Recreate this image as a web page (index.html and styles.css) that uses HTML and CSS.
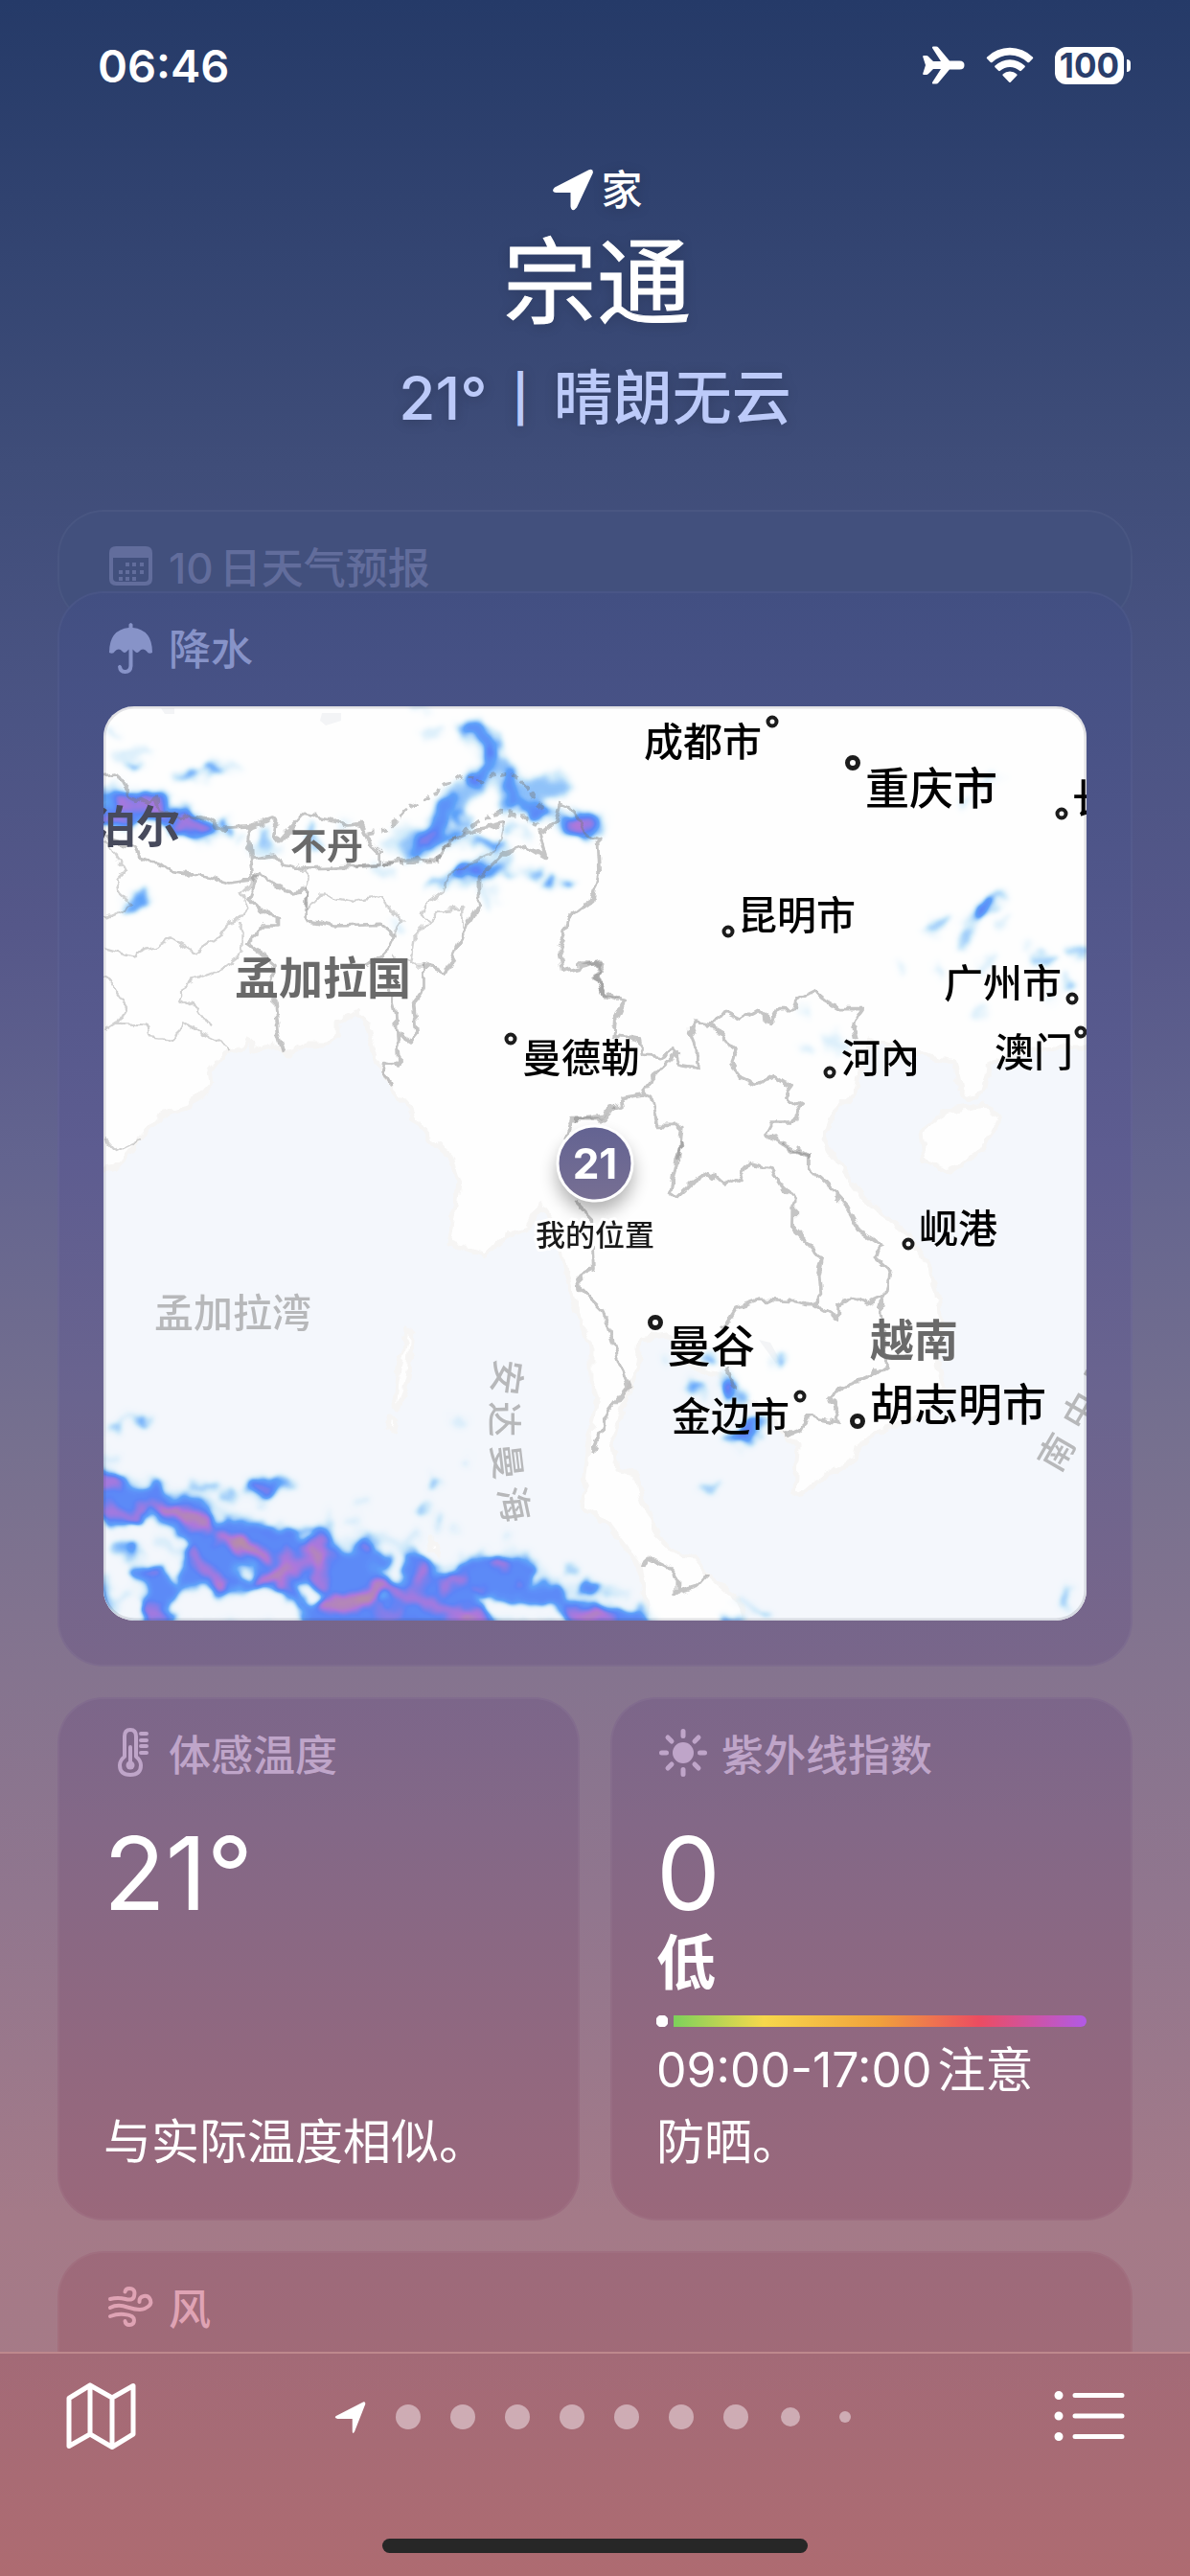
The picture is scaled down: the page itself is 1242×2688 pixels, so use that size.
FILE: index.html
```html
<!DOCTYPE html>
<html lang="zh-CN">
<head>
<meta charset="utf-8">
<meta name="viewport" content="width=device-width, initial-scale=1">
<title>天气</title>
<link rel="stylesheet" href="styles.css">
</head>
<body>
<div class="status">
  <span class="clock">06:46</span>
  <span class="status-icons">
    <svg class="plane" viewBox="0 0 44 40" aria-label="飞行模式"><path d="M1 10h3q1 0 2 1l5 5h8L10 2q-.6-1.600 1-1.600h3q1.500 0 2.500 1.300L28 15.500h10.500q5 0 5 4.500t-5 4.500H28L16.500 38.300q-1 1.300-2.500 1.300h-3q-1.600 0-1-1.600l9-14h-8l-5 5q-1 1-2 1H1q-1 0-.8-1.200L3 20 .2 11.200Q0 10 1 10z"/></svg>
    <svg class="wifi" viewBox="0 0 50 38" aria-label="无线网络"><g><path d="M1.200 10.500a34 34 0 0 1 47.600 0q.9.9 0 1.800l-3.600 3.600q-.9.900-1.800 0a26.500 26.500 0 0 0-36.800 0q-.9.900-1.800 0l-3.600-3.600q-.9-.900 0-1.800z"/><path d="M9.500 19.500a22.500 22.500 0 0 1 31 0q.9.9 0 1.800l-3.600 3.500q-.9.900-1.800 0a15 15 0 0 0-20.200 0q-.9.900-1.800 0l-3.600-3.500q-.9-.900 0-1.800z"/><path d="M17.800 28.200a11 11 0 0 1 14.400 0q1 .9 0 1.900l-6.200 6.300q-1 1-2 0l-6.200-6.300q-1-1 0-1.900z"/></g></svg>
    <span class="battery">100</span>
  </span>
</div>

<header class="place">
  <p class="tag">
    <svg class="loc" viewBox="0 0 44 44" aria-hidden="true"><path d="M3 19.500 38.500 1.200Q43.500-.5 42.800 4.500L26 40.500q-5 6-6.500-1V25H4.500Q-1.500 24 3 19.500z"/></svg>
    <span>家</span>
  </p>
  <h1>宗通</h1>
  <p class="cond"><span>21°</span><span class="bar">|</span><span>晴朗无云</span></p>
</header>

<main class="cards">
  <section class="card forecast">
    <h2><svg class="icon" viewBox="0 0 56 56" aria-hidden="true"><path fill-rule="evenodd" d="M13 8h31q7 0 7 7v27q0 7-7 7H13q-7 0-7-7V15q0-7 7-7zM10 20v21q0 4 4 4h29q4 0 4-4V20z"/><path d="M23 25h4v4h-4zm7 0h4v4h-4zm8 0h4v4h-4zm-22 8h4v4h-4zm7 0h4v4h-4zm7 0h4v4h-4zm8 0h4v4h-4zm-22 7h4v4h-4zm7 0h4v4h-4zm7 0h4v4h-4z"/></svg><span><span class="count">10</span>日天气预报</span></h2>
  </section>

  <section class="card rain">
    <h2><svg class="icon" viewBox="0 0 56 56" aria-hidden="true"><path d="M6 34Q6 10 26.500 8V4.500q2-3 4 0V8Q51 10 51 34q-4 2-6-1.500-4-4-8 .5-2 2-4 0l-2.500-2.500V48q-.5 8-8 8-7 0-7.500-7.500 2-3.500 4 0Q19.500 52 22.500 52q3.500 0 4-4V30.500L24 33q-2 2-4 0-4-4.500-8-.5Q10 36 6 34z"/></svg><span>降水</span></h2>
    <svg class="map" viewBox="0 0 1026 954" role="img" aria-label="降水地图">
      <defs>
        <filter id="rough" x="-5%" y="-5%" width="110%" height="110%" color-interpolation-filters="sRGB">
          <feTurbulence type="fractalNoise" baseFrequency="0.08" numOctaves="2" seed="4"/>
          <feDisplacementMap in="SourceGraphic" scale="11" xChannelSelector="R" yChannelSelector="G"/>
        </filter>
        <filter id="radar" filterUnits="userSpaceOnUse" x="-40" y="-40" width="1106" height="1034" color-interpolation-filters="sRGB">
          <feGaussianBlur in="SourceGraphic" stdDeviation="3" result="soft"/>
          <feTurbulence type="fractalNoise" baseFrequency="0.05" numOctaves="2" seed="9"/>
          <feDisplacementMap in="soft" scale="20" xChannelSelector="R" yChannelSelector="G"/>
          <feGaussianBlur stdDeviation="2"/>
          <feColorMatrix values="0 0 0 1 0  0 0 0 1 0  0 0 0 1 0  0 0 0 1 0"/>
          <feComponentTransfer>
            <feFuncR type="table" tableValues=".92 .68 .34 .36 .68 .74"/>
            <feFuncG type="table" tableValues=".97 .86 .62 .52 .47 .60"/>
            <feFuncB type="table" tableValues="1 .97 .98 .97 .86 .55"/>
            <feFuncA type="table" tableValues="0 .6 .95 1 1 1"/>
          </feComponentTransfer>
        </filter>
        <filter id="drop" x="-40%" y="-40%" width="180%" height="180%"><feGaussianBlur stdDeviation="9"/></filter>
        <linearGradient id="pin" x1="0" y1="0" x2="0" y2="1"><stop stop-color="#636392"/><stop offset="1" stop-color="#776f93"/></linearGradient>
      </defs>

      <rect width="1026" height="954" fill="#fefefe"/>
      <!-- seas and islands -->
      <g class="sea" filter="url(#rough)">
        <path d="M-20 488 13 481 37 452 61 426 92 416 113 393 111 380 126 363 147 355 152 346 157 360 178 353 192 363 212 353 233 353 245 343 245 330 264 320 274 330 281 360 297 393 319 420 336 446 362 470 371 496 364 540 360 560 398 573 419 553 443 545 457 520 474 543 481 580 491 626 509 670 509 706 515 720 507 766 502 813 500 836 527 853 560 896 565 933 576 980H-20z"/>
        <path d="M1050 356 992 356 956 360 925 372 919 403 903 410 894 400 888 370 863 365 842 360 813 352 799 346 788 386 785 403 763 423 753 450 760 466 779 493 796 516 835 546 863 586 872 620 874 653 872 693 878 710 860 736 803 760 788 773 785 786 749 806 728 823 721 820 724 773 710 760 692 736 663 720 653 700 635 696 610 686 588 656 560 660 558 686 546 720 531 763 535 796 555 800 562 826 578 866 592 880 613 886 635 910 663 933 678 980H1050z"/>
        <path class="land" d="M853 443 878 423 921 416 935 430 919 460 917 463 885 485 856 476zM317 650l6 3-5 50-11 32-3-4 5-40zM299 742l6 4-2 10-6-4zM340 868l8 6 2 12-8-6z"/>
      </g>
      <g fill="#f3f4f6"><path d="M684 661l12 3 10 18-4 4zM60 2l14 0 0 6-10 0zM228 7l20 0 0 8-16 5-6-5z"/></g>

      <!-- precipitation intensity -->
      <g filter="url(#radar)">
        <g transform="translate(-7 -6) scale(.34438 .33333)">
          <g class="r1">
            <path class="s90" d="M1130 90 1190 140 1200 200 1130 270 1070 330 1040 400 950 470M1230 220 1260 320M1330 280 1400 260M1430 380 1490 400M1040 440 1100 410M1130 540 1220 500"/>
            <path class="s60" d="M1130 80 1200 130 1210 200 1130 270 1060 340 1020 430 950 480M1230 200 1260 280 1250 330M1320 270 1400 270M1260 230 1340 350M900 440 960 410M1400 380 1520 380"/>
            <path class="s30" d="M50 90 60 110M60 180 160 150M90 205 130 205M250 240 330 235M340 215 420 205M440 430 430 440M480 470 550 470M840 520 890 540M900 700 920 710M1160 440 1250 450M1160 510 1180 640M1290 540 1340 540M1210 600 1210 605M1290 400 1310 430M990 110 1040 90M80 650 160 610M60 260 60 330M750 380 760 385M960 20 990 20"/>
            <path class="s90" d="M0 330 180 340 330 400"/>
            <path class="s60" d="M0 330 180 340 330 410M0 370 100 370"/>
          </g>
          <g class="r2">
            <path class="s30" d="M1120 90 1150 90 1190 130 1200 180M1180 210 1140 250M1250 230 1260 330M1060 310 1040 390 1000 430 970 480M1100 350 1110 380M1060 430 1100 420M1290 330 1370 350M1430 370 1500 380 1480 420M1010 575 1070 560 1090 530M1150 550 1220 510M1150 440 1220 445M1380 570 1381 571M1430 570 1432 571M1250 545 1252 547M1338 540 1340 542M1250 400 1252 402"/>
            <path class="s60" d="M1000 435 1020 430M1450 390 1480 400M20 370 190 330 240 380 330 405M80 310 200 310"/>
            <path class="s30" d="M0 290 40 300M390 380 392 410M510 400 510 440M80 645 150 610M340 215 370 216M650 390 655 440M110 205 120 205M270 238 290 238M1195 165 1200 180M1140 245 1150 255M1090 530 1150 535M1320 350 1350 355M390 385 392 405M1380 570 1382 571M1430 570 1432 571"/>
          </g>
          <g class="r3">
            <path class="s40" d="M70 320 100 310M130 310 200 330 180 370M260 385 320 405M0 380 90 375M1460 385 1465 400"/>
            <path class="s20" d="M1090 530 1110 530M1140 535 1145 540M395 400 396 402M660 465 662 466"/>
          </g>
        </g>
        <g transform="translate(493 -6) scale(.35714 .33333)">
          <g class="r1"><path class="s30" d="M1180 270 1230 240M1130 330 1140 310M1030 720 1090 690M1130 770 1150 710M1150 690 1250 600M1240 700 1255 690M1180 850 1215 800M1060 830 1062 860M1350 810 1390 812M1450 780 1495 790M1430 880 1445 870M1170 985 1190 965M1390 940 1400 920M670 1090 690 1100M740 1070 760 1050M760 1090 790 1080M950 840 952 835M1320 770 1321 771M670 970 671 975"/><path class="s40" d="M1170 670 1240 610M1040 705 1080 690M1130 750 1145 725M1355 812 1385 812M1460 786 1488 788M1430 878 1442 872"/></g>
          <g class="r2"><path class="s30" d="M1175 660 1205 635"/></g>
          <g class="r2"><path class="s20" d="M1170 665 1200 635"/></g>
        </g>
        <g transform="translate(-7 454) scale(.34438 .33333)">
          <path class="r1 wide" d="M0 1010 60 1060 180 1080 330 1130 400 1170 560 1225 700 1200 730 1290 800 1230 930 1260 1000 1350 1170 1300 1290 1290 1330 1340 1420 1400 1560 1470V1520H-40V1010z"/>
          <path class="r2" fill-rule="evenodd" d="M-20 1000 60 1060 120 1090 180 1070 230 1110 330 1130 355 1190 400 1170 440 1200 500 1195 560 1225 640 1210 700 1215 730 1290 770 1300 780 1260 810 1230 850 1260 830 1330 880 1360 920 1380 930 1270 970 1300 1010 1350 1080 1370 1100 1310 1170 1300 1290 1300 1335 1340 1310 1390 1400 1380 1420 1440 1560 1470 1640 1450 1700 1490V1530H1500L1400 1460 1260 1440 1150 1420 1220 1530H650L580 1400 480 1410 420 1400 360 1440 320 1390 240 1420 200 1450 250 1480 200 1530H130L150 1400 100 1340 200 1320 240 1400 270 1290 250 1240 160 1170 100 1200-20 1180zM420 1335 480 1330 470 1360 430 1360zM620 1220 655 1220 650 1245 625 1245zM840 1290 900 1290 890 1340 830 1340zM590 1400 650 1390 690 1440 650 1450zM860 1430 900 1430 890 1455 860 1450z"/>
          <g class="r2">
            <path class="s60" d="M80 1270 110 1290M470 1080 540 1080M-10 1380 30 1440M870 1470 900 1470"/>
            <path class="s30" d="M290 1080 360 1080M390 1108 415 1108M575 1080 585 1080M40 900 70 900M140 873 160 873M1020 1055 1035 1055M980 1160 1000 1145M1430 1345 1450 1345M1470 1395 1510 1395M1020 1080 1022 1082M1030 1190 1032 1190M480 1080 535 1080M300 1080 350 1080"/>
          </g>
          <g class="r3">
            <path class="s40" d="M30 1150 90 1185 140 1155M180 1140 260 1170 330 1210M200 1160 320 1180M380 1240 440 1270 520 1300M280 1290 330 1340 380 1395M500 1380 580 1340 650 1300 700 1260M640 1270 680 1330 670 1390M690 1450 790 1450 870 1390 980 1430 1100 1490 1180 1490M0 1060 60 1075M150 1475 190 1475M1210 1310 1230 1325M580 1300 590 1340M1450 1500 1550 1490M1050 1390 1110 1370M980 1380 1010 1330M560 1390 590 1420"/>
            <path class="s20" d="M100 1270 110 1280M150 1350 180 1345M480 1080 520 1080M-5 1410 15 1415M1425 1465 1440 1465M1150 1405 1170 1405M810 1265 830 1270M1270 1395 1280 1395"/>
          </g>
          <g class="r3"><path class="s40" d="M210 1150 320 1190M400 1250 510 1295M650 1280 690 1310M700 1455 800 1445 860 1395M520 1380 580 1345"/></g>
          <g class="r3"><path class="s40" d="M425 1265 455 1270M795 1430 805 1425M1110 1490 1130 1485M378 1395 390 1395"/></g>
          <g class="r1"><path class="s30" d="M0 990 60 990M80 870 150 870M1080 873 1105 873M1110 1003 1130 1003M1250 1230 1250 1240M700 1170 705 1190M770 1185 780 1190M180 1240 240 1290M70 1440 110 1410M950 1240 980 1240M1080 1215 1082 1216M790 1135 815 1135M480 1135 500 1135M1500 1400 1560 1400"/></g>
        </g>
        <g transform="translate(493 454) scale(.35714 .33333)">
          <g class="r1"><path class="s30" d="M260 685 270 685M370 690 400 680M330 770 370 770 380 810M440 710 450 800M480 800 490 805M370 1082 410 1082M440 940 480 950M520 900 540 870M100 1415 140 1415M480 1440 560 1490M440 1500 480 1500M1420 1450 1440 1400M1440 1470 1442 1472M590 690 600 690"/><path class="s30" d="M375 1082 405 1082M1425 1445 1435 1410M540 1480 560 1490"/></g>
          <g class="r2"><path class="s30" d="M385 683 390 685M340 770 360 765M440 750 450 780M450 930 500 930 550 860M480 800 482 802M20 1395 50 1395M0 1470 80 1465M592 694 598 692M440 1500 460 1498"/><path class="s40" d="M480 915 520 890M445 755 447 775"/></g>
          <g class="r3"><path class="s20" d="M443 755 446 770M475 920 500 905M0 1490 80 1480"/></g>
        </g>
      </g>

      <!-- borders -->
      <g class="lines" filter="url(#rough)">
        <g transform="translate(-7 -6) scale(.34438 .33333)">
          <path d="M0 235 60 228 80 265 110 300 150 320 180 310 190 340 250 370 280 360 330 375 380 400 470 395 530 372 545 390 540 420 555 440 590 400 630 355 700 370 760 390 800 385 830 450 860 480 860 515 780 520 620 525 560 510 535 480 470 490 455 460 460 430 470 395M460 430 472 560 400 570 350 555 300 545 220 535 190 510 130 490 115 460 30 430M490 540 460 620 500 660 550 680 550 705 495 705 480 740 455 760 500 795 540 830 520 900 540 940 550 1040 568 1100M490 540 530 570 590 600 635 590 640 690 730 705 860 700 900 735 880 780 860 800 820 830M885 900 905 980 915 1140 870 1130 865 1160 887 1205M915 1040 950 1065 970 1040 960 950 990 910 990 830 1060 850 1100 760 1120 710 1160 640 1160 550 1230 480 1300 455 1360 490 1340 420 1390 380 1405 320 1450 340 1480 420 1520 440 1525 540 1505 620 1430 680 1420 720 1400 780 1410 850 1530 820 1510 860 1540 930 1580 940M870 510 950 495 1030 500 1070 440 1160 400 1240 385M1568 1270 1540 1310 1440 1310 1420 1370"/>
          <path class="dash" d="M820 412 880 405 930 350 1000 300 1060 265 1120 230 1170 260 1200 235 1260 225 1310 280 1360 350M870 510 1030 505 1060 450 1170 370 1220 350 1290 360 1350 405"/>
          <path class="thin" d="M25 440 60 500 90 530 60 560 70 600 110 640 25 680M25 775 110 800 160 780 230 745 300 790 370 740 400 700 440 680 460 650 440 600 490 550M440 690 440 790 380 840 300 870 250 900 250 930 310 970 340 1020M25 860 60 910 90 960 60 1010 150 1015 160 1050 240 1060 260 1000 320 1040 380 1070 405 1100M60 1010 25 1035M640 600 630 660 650 640 680 610 780 630 870 610 890 660 925 690 900 730M860 515 780 520M640 530 635 590M1060 550 1050 600 1000 640 985 670 1010 690 960 740 950 830 990 830M1010 690 1040 660 1110 650 1110 710M900 800 950 820M1240 385 1230 430 1190 480 1060 550M25 1370 60 1410 130 1375"/>
        </g>
        <g transform="translate(493 -6) scale(.35714 .33333)">
          <path d="M0 825 80 825 60 860 80 920 140 940 115 1000 110 1045 185 1060 195 1110 250 1115 290 1090 300 1140 355 1150 350 1080 335 1040 345 1005 400 1015 430 975 480 1000 530 970 570 1005 590 965 640 965 650 935 695 910 730 940 770 965 840 965 810 1010 820 1060M400 1015 440 1070 470 1090 455 1130 480 1180 530 1205 580 1175 630 1210 610 1240 660 1270 630 1320 570 1320 555 1350 620 1400 685 1430M300 1100 240 1160 190 1230 220 1240 240 1330 310 1330 300 1440M190 1230 135 1240 140 1265 95 1275 80 1300 0 1310"/>
        </g>
        <g transform="translate(493 454) scale(.35714 .33333)">
          <path d="M310 0 290 80 275 160 295 175 340 130 390 95 435 135 480 110 510 68 570 85 600 140 640 180 638 275 690 330 720 370 710 420 715 480 690 510 640 500 535 495 470 520 440 570 420 590M600 0 680 45 680 80 730 130 790 200 830 280 895 325 875 360 915 400 905 480 890 520 895 560 910 700 870 730 800 760 745 795 775 880 680 860 660 900 610 920M690 510 765 555 765 510 810 490 850 510 900 485M445 710 465 780M0 190 45 240 50 400 10 420 15 460 80 530 105 620 130 700 155 770 90 860 48 970M195 1330 210 1300 265 1330 295 1370 295 1415 355 1395 388 1355"/>
        </g>
      </g>

      <!-- place names -->
      <g class="rings">
        <circle cx="698" cy="16" r="4.500"/><circle cx="1000" cy="112" r="4.500"/><circle cx="652" cy="235" r="4.500"/><circle cx="1011" cy="305" r="4.500"/><circle cx="1020" cy="340" r="4.500"/><circle cx="758" cy="382" r="4.500"/><circle cx="425" cy="347" r="4.500"/><circle cx="840" cy="561" r="4.500"/><circle cx="727" cy="720" r="4.500"/>
        <g class="big"><circle cx="782" cy="59" r="5.500"/><circle cx="576" cy="643" r="5.500"/><circle cx="787" cy="746" r="5.500"/></g>
      </g>
      <g class="city">
        <text x="564" y="52">成都市</text>
        <text x="1011" y="111">长沙市</text>
        <text x="662" y="233">昆明市</text>
        <text x="877" y="304">广州市</text>
        <text x="930" y="376">澳门</text>
        <text x="770" y="382">河內</text>
        <text x="437" y="382">曼德勒</text>
        <text x="851" y="560">岘港</text>
        <text x="593" y="756">金边市</text>
        <g class="major">
          <text x="795" y="102">重庆市</text>
          <text x="588" y="684">曼谷</text>
          <text x="800" y="745">胡志明市</text>
        </g>
      </g>
      <g class="country">
        <text x="80" y="142" text-anchor="end" class="dark">尼泊尔</text>
        <text x="137" y="300">孟加拉国</text>
        <text x="800" y="678">越南</text>
        <text x="195" y="159" class="small">不丹</text>
      </g>
      <g class="water">
        <text x="53" y="648">孟加拉湾</text>
        <path id="andaman" d="M411 680Q394 762 424 870" fill="none"/>
        <text x="0 46 92 138" class="turn"><textPath href="#andaman">安达曼海</textPath></text>
        <text x="0 50 100 150" class="turn" transform="translate(997 801) rotate(-60)">南中国海</text>
      </g>

      <circle cx="513" cy="488" r="40" fill="#000" opacity=".3" filter="url(#drop)"/>
      <circle cx="513" cy="477" r="39" fill="url(#pin)" stroke="#fff" stroke-width="3"/>
      <text class="pin" x="513" y="493" text-anchor="middle">21</text>
      <text class="here" x="513" y="563" text-anchor="middle">我的位置</text>
      <rect class="edge" x="1" y="1" width="1024" height="952" rx="31"/>
    </svg>
  </section>

  <div class="pair">
    <section class="card tile">
      <h2><svg class="icon line" viewBox="0 0 56 56" aria-hidden="true"><path d="M22 32V11q0-7 6-7t6 7v21q5 4 5 9 0 10-11 10T17 41q0-5 5-9z"/><path d="M28 22v18M39 8h6M39 15h6M39 21h6M39 28h6"/><circle cx="28" cy="41" r="4.500" class="solid"/></svg><span>体感温度</span></h2>
      <p class="value">21°</p>
      <p class="note">与实际温度相似。</p>
    </section>
    <section class="card tile">
      <h2><svg class="icon line" viewBox="0 0 56 56" aria-hidden="true"><circle cx="28" cy="28" r="11" class="solid"/><path class="ray" d="M28 5.500v5M28 45.500v5M5.500 28h5M45.500 28h5M12 12l4 4M40 40l4 4M12 44l4-4M40 16l4-4"/></svg><span>紫外线指数</span></h2>
      <p class="value">0</p>
      <p class="level">低</p>
      <div class="scale"><i></i></div>
      <p class="note"><span class="hours">09:00-17:00</span>注意<span class="keep">防晒。</span></p>
    </section>
  </div>

  <section class="card wind">
    <h2><svg class="icon line" viewBox="0 0 56 56" aria-hidden="true"><path d="M7 20q8-2 16 0t9-3q2-8-5-8-4 0-4.500 3.500M7 29q8-4 18-.5 13 4 18 1.500 8-3.500 6-9-2-5-7-4-5 1-4.500 6M7 38q8-3 15-2 10 1 10 6 0 5-5 5-4 0-4.500-4"/></svg><span>风</span></h2>
  </section>
</main>

<nav class="tabbar" aria-label="城市">
  <div class="tools">
    <button aria-label="地图"><svg class="tool" viewBox="0 0 76 76"><path d="M4 18.500 26 5l23 13L71 5.500V56L49 69.500 26 56 4 68.500zM26 5v51M49 18v51"/></svg></button>
    <div class="pages">
      <button class="current" aria-label="当前位置"><svg class="here-dot" viewBox="0 0 44 44"><path d="M3 19.500 40 .5Q43.500-.5 43 3.500L28 42q-2.500 4-3-.5V24H4.500Q-1.500 22 3 19.500z"/></svg></button>
      <button aria-label="第2页"></button><button aria-label="第3页"></button><button aria-label="第4页"></button><button aria-label="第5页"></button><button aria-label="第6页"></button><button aria-label="第7页"></button><button aria-label="第8页"></button><button class="mid" aria-label="第9页"></button><button class="tiny" aria-label="第10页"></button>
    </div>
    <button aria-label="列表"><svg class="tool" viewBox="0 0 76 76"><path d="M22 15.500h49M22 37h49M22 58.500h49"/><path class="bullets" d="M5 15.500h0M5 37h0M5 58.500h0"/></svg></button>
  </div>
  <div class="home"></div>
</nav>
</body>
</html>
```
FILE: styles.css
```css
* { box-sizing: border-box; margin: 0; }
body {
  height: 100vh;
  display: flex;
  flex-direction: column;
  overflow: hidden;
  color: #fff;
  font-family: Inter, "Noto Sans CJK SC", sans-serif;
  background: linear-gradient(#253a68 0, #3f4d79 18%, #4b5484 28%, #555789 36%, #63648f 45%, #76708f 56%, #85748f 65%, #91768e 74%, #a47a88 86%, #a87a85 100%);
}
h1, h2 { font-weight: inherit; }
button {
  padding: 0;
  border: 0;
  background: none;
  color: inherit;
  display: grid;
  place-items: center;
}
svg { display: block; fill: currentColor; }

/* status bar */
.status {
  flex: none;
  height: 136px;
  padding: 0 62px 0 102px;
  display: flex;
  align-items: center;
  justify-content: space-between;
}
.clock { font-size: 47px; font-weight: 600; }
.status-icons { display: flex; align-items: center; gap: 22px; }
.plane { width: 44px; height: 40px; }
.wifi { width: 50px; height: 38px; }
.battery {
  position: relative;
  width: 72px;
  height: 39px;
  margin-right: 7px;
  border-radius: 12px;
  background: #fff;
  color: #2a3e6b;
  font-size: 35px;
  font-weight: 700;
  line-height: 39px;
  text-align: center;
}
.battery::after {
  content: "";
  position: absolute;
  left: 75px;
  top: 13px;
  width: 4px;
  height: 13px;
  border-radius: 0 4px 4px 0;
  background: #fff;
}

/* place header */
.place {
  flex: none;
  padding: 34px 0 64px;
  text-align: center;
  text-shadow: 0 2px 14px rgba(0, 0, 0, .18);
}
.tag {
  display: flex;
  justify-content: center;
  align-items: center;
  gap: 8px;
  padding-left: 4px;
  font-size: 43px;
  font-weight: 500;
  line-height: 56px;
}
.loc { width: 44px; height: 44px; }
.place h1 { font-size: 98px; line-height: 138px; padding-left: 4px; -webkit-text-stroke: 1px; }
.cond {
  display: flex;
  justify-content: center;
  font-size: 62px;
  font-weight: 500;
  line-height: 104px;
  color: #bccaf9;
}
.cond .bar { font-size: 48px; font-weight: 600; margin: 0 26px; }

/* cards */
.cards {
  flex: 1;
  min-height: 0;
  overflow: hidden;
  padding: 0 60px;
  display: flex;
  flex-direction: column;
  gap: 32px;
}
.card {
  flex: none;
  border-radius: 48px;
  box-shadow: inset 0 0 0 2px rgba(255, 255, 255, .04);
}
.card h2 {
  height: 120px;
  padding: 0 0 4px 48px;
  display: flex;
  align-items: center;
  gap: 12px;
  font-size: 44px;
  font-weight: 500;
}
.icon { width: 56px; height: 56px; }
.line { fill: none; stroke: currentColor; stroke-width: 4; stroke-linecap: round; stroke-linejoin: round; }
.line .solid { fill: currentColor; stroke: none; }
.line .ray { stroke-width: 5; }
.count { margin-right: 6px; }
.forecast { background: #42507d; color: #626d9c; margin-bottom: -67px; }
.rain {
  padding: 0 48px 48px;
  background: linear-gradient(#424f82, #485286 12%, #5d5c90 52%, #6a648f 75%, #79668a);
  color: #8793c8;
}
.rain h2, .tile h2 { padding-left: 0; }
.pair { flex: none; display: grid; grid-template-columns: 1fr 1fr; gap: 32px; }
.tile {
  height: 546px;
  padding: 0 48px 44px;
  display: flex;
  flex-direction: column;
  background: linear-gradient(#7c668a, #836887 24%, #8c6882 52%, #94687e 78%, #9a687b);
}
.tile h2 { color: #bfa5c9; }
.value { font-size: 106px; line-height: 128px; }
.level { font-size: 62px; font-weight: 700; line-height: 60px; }
.note { margin-top: auto; font-size: 50px; line-height: 75px; }
.hours { margin-right: 6px; }
.keep { display: inline-block; white-space: nowrap; }
.scale {
  height: 12px;
  margin-top: 24px;
  border-radius: 6px;
  background: linear-gradient(90deg, #77d05c 3%, #f7d84b 25%, #f0a03c 52%, #ec4c61 75%, #b15ae6);
}
.scale i {
  display: block;
  width: 18px;
  height: 12px;
  border-right: 6px solid #8d6882;
  background: radial-gradient(circle at 6px 6px, #fff 6px, #8d6882 7px);
}
.wind { height: 300px; background: linear-gradient(#9d6a7b, #a16a77 40%); color: #dfa3b4; }

/* map */
.map { width: 100%; height: auto; border-radius: 32px; }
.sea { fill: #f4f7fc; stroke: #f6f5f4; stroke-width: 5; stroke-linejoin: round; }
.sea .land { fill: #fefefe; }
.r1, .r2, .r3 { fill: none; stroke: #000; stroke-linecap: round; stroke-linejoin: round; }
.r1 { stroke-opacity: .18; }
.r2 { stroke-opacity: .34; }
.r3 { stroke-opacity: .52; }
.wide { stroke-width: 40; stroke-opacity: .16; }
path.r2 { fill: #000; fill-opacity: .56; stroke: none; }
.s20 { stroke-width: 20; }
.s30 { stroke-width: 30; }
.s40 { stroke-width: 40; }
.s60 { stroke-width: 60; }
.s90 { stroke-width: 90; }
.lines { fill: none; stroke: #777; stroke-opacity: .42; stroke-width: 11; stroke-linejoin: round; }
.lines .thin { stroke-width: 7; stroke-opacity: .32; }
.lines .dash { stroke-dasharray: 24 16; }
.map text { font-family: "Noto Sans CJK SC", sans-serif; }
.rings { fill: #fff; stroke: #1c1c1c; stroke-width: 4; }
.rings .big { stroke-width: 5; }
.city { fill: #000; font-size: 41px; font-weight: 500; }
.city .major { font-size: 46px; }
.country { fill: #6a6a6a; font-size: 46px; font-weight: 700; }
.country .dark { fill: #474a5c; }
.country .small { font-size: 38px; }
.water { fill: #b7b8ba; font-size: 41px; font-weight: 500; }
.water .turn { font-size: 37px; }
.map .pin { fill: #fff; font-family: Inter, sans-serif; font-size: 44px; font-weight: 700; }
.here { fill: #1a1a1a; font-size: 31px; font-weight: 500; stroke: #fff; stroke-width: 6px; paint-order: stroke; stroke-linejoin: round; }
.edge { fill: none; stroke: rgba(60, 60, 80, .14); stroke-width: 3; }

/* bottom bar */
.tabbar {
  flex: none;
  height: 234px;
  border-top: 2px solid rgba(255, 255, 255, .2);
  background: linear-gradient(#a36a77, #a76b75 40%, #ae6b71);
}
.tools {
  height: 134px;
  padding: 0 66px 2px 68px;
  display: flex;
  align-items: center;
  justify-content: space-between;
}
.tool { width: 76px; height: 76px; fill: none; stroke: currentColor; stroke-width: 5; stroke-linecap: round; stroke-linejoin: round; }
.tool .bullets { stroke-width: 9; }
.pages { display: flex; }
.pages button { width: 57px; height: 57px; }
.pages .current { width: 64px; }
.pages button:empty::before {
  content: "";
  width: 26px;
  height: 26px;
  border-radius: 50%;
  background: #ceacb4;
}
.pages .mid:empty::before { width: 20px; height: 20px; }
.pages .tiny:empty::before { width: 12px; height: 12px; }
.here-dot { width: 33px; height: 33px; }
.home {
  width: 444px;
  height: 15px;
  margin: 59px auto 0;
  border-radius: 8px;
  background: #272727;
}
```
